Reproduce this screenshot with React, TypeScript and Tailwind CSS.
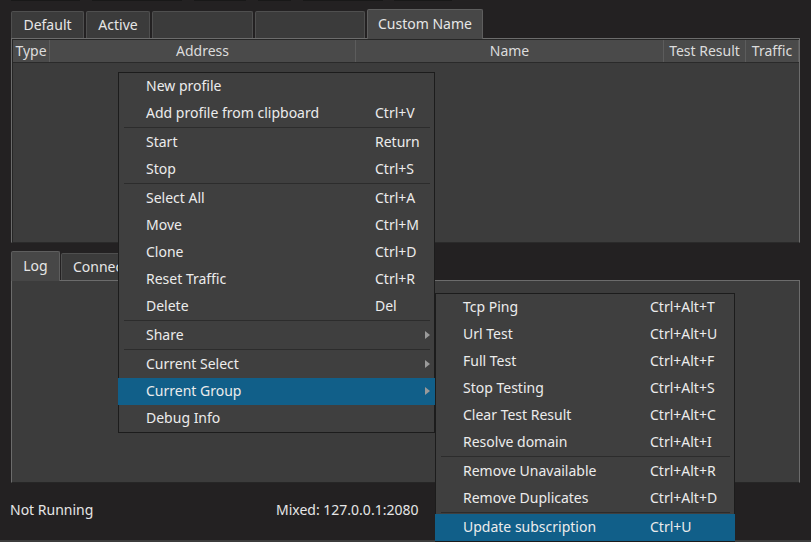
import React from "react";

type Item =
  | { sep: true }
  | { label: string; keys?: string; sub?: boolean; active?: boolean };

const mainMenu: Item[] = [
  { label: "New profile" },
  { label: "Add profile from clipboard", keys: "Ctrl+V" },
  { sep: true },
  { label: "Start", keys: "Return" },
  { label: "Stop", keys: "Ctrl+S" },
  { sep: true },
  { label: "Select All", keys: "Ctrl+A" },
  { label: "Move", keys: "Ctrl+M" },
  { label: "Clone", keys: "Ctrl+D" },
  { label: "Reset Traffic", keys: "Ctrl+R" },
  { label: "Delete", keys: "Del" },
  { sep: true },
  { label: "Share", sub: true },
  { sep: true },
  { label: "Current Select", sub: true },
  { label: "Current Group", sub: true, active: true },
  { label: "Debug Info" },
];

const groupMenu: Item[] = [
  { label: "Tcp Ping", keys: "Ctrl+Alt+T" },
  { label: "Url Test", keys: "Ctrl+Alt+U" },
  { label: "Full Test", keys: "Ctrl+Alt+F" },
  { label: "Stop Testing", keys: "Ctrl+Alt+S" },
  { label: "Clear Test Result", keys: "Ctrl+Alt+C" },
  { label: "Resolve domain", keys: "Ctrl+Alt+I" },
  { sep: true },
  { label: "Remove Unavailable", keys: "Ctrl+Alt+R" },
  { label: "Remove Duplicates", keys: "Ctrl+Alt+D" },
  { sep: true },
  { label: "Update subscription", keys: "Ctrl+U", active: true },
];

const columns = [
  { name: "Type", w: "w-[37px]" },
  { name: "Address", w: "w-[306px]" },
  { name: "Name", w: "w-[308px]" },
  { name: "Test Result", w: "w-[82px]" },
  { name: "Traffic", w: "flex-1" },
];

function Menu({ items, labelW }: { items: Item[]; labelW: string }) {
  return (
    <div className="flex flex-col">
      {items.map((it, i) =>
        "sep" in it ? (
          <div key={i} className="h-[2px] pl-[5px] pr-[4px]">
            <div className="h-px bg-[#2c2c2c]" />
          </div>
        ) : (
          <div
            key={i}
            className={`relative -mx-px flex h-[27px] items-center pb-[2px] pl-[28px] ${
              it.active ? "bg-[#115f89]" : ""
            }`}
          >
            <span className={`${labelW} shrink-0`}>{it.label}</span>
            {it.keys && <span>{it.keys}</span>}
            {it.sub && (
              <svg
                width="5"
                height="8"
                viewBox="0 0 5 8"
                className="absolute right-[5px] top-[9px]"
              >
                <path d="M0 0 L5 4 L0 8 Z" fill="#9a9a9a" />
              </svg>
            )}
          </div>
        )
      )}
    </div>
  );
}

function Tab({
  label,
  w,
  selected,
}: {
  label?: string;
  w: string;
  selected?: boolean;
}) {
  return (
    <div
      className={`${w} flex items-center justify-center rounded-t-[2px] border border-b-0 ${
        selected
          ? "relative z-10 -mb-px h-[30px] border-[#5e5e5e] bg-[#474747] pb-[3px]"
          : "h-[27px] border-[#4f4f4f] bg-[#3b3b3b] pb-[2px]"
      }`}
    >
      {label}
    </div>
  );
}

export default function App() {
  return (
    <div
      className="relative flex h-[542px] w-[811px] flex-col overflow-hidden bg-[#232122] text-[14px] text-[#e6e6e6]"
      style={{ fontFamily: '"Noto Sans", "Open Sans", sans-serif' }}
    >
      {/* toolbar remnants */}
      <div className="flex h-px">
        <span className="ml-[11px] w-[69px] bg-[#181818]" />
        <span className="ml-[12px] w-[90px] bg-[#181818]" />
        <span className="ml-[12px] w-[52px] bg-[#181818]" />
        <span className="ml-[12px] w-[33px] bg-[#181818]" />
        <span className="ml-[12px] w-[80px] bg-[#181818]" />
        <span className="ml-[11px] w-[58px] bg-[#181818]" />
      </div>

      {/* profile groups */}
      <div className="mt-[8px] flex h-[29px] items-end gap-[2px] pl-[11px]">
        <Tab label="Default" w="w-[73px]" />
        <Tab label="Active" w="w-[64px]" />
        <Tab w="w-[101px]" />
        <Tab w="w-[110px]" />
        <Tab label="Custom Name" w="w-[116px]" selected />
      </div>

      <div className="mx-[11px] h-[205px] border border-[#6c6c6c] border-b-[#2a2a2a] bg-[#3c3c3c]">
        <div className="h-full border border-[#262626] border-r-0 border-b-0">
          <div className="flex h-[23px] border-b border-[#2a2a2a] bg-[#4a4a4a] text-[#dcdcdc]">
            {columns.map((c) => (
              <div
                key={c.name}
                className={`${c.w} flex items-center justify-center whitespace-nowrap border-r border-[#5c5c5c] pb-px leading-none`}
              >
                {c.name}
              </div>
            ))}
          </div>
        </div>
      </div>

      {/* log area */}
      <div className="mt-[8px] flex h-[29px] items-end gap-[1px] pl-[11px]">
        <Tab label="Log" w="w-[49px]" selected />
        <div className="flex h-[27px] w-[104px] items-center rounded-t-[2px] border border-b-0 border-[#4f4f4f] bg-[#3b3b3b] pb-[2px] pl-[11px]">
          Connections
        </div>
      </div>
      <div className="mx-[11px] h-[203px] border border-[#6c6c6c] border-b-[#262626] bg-[#3c3c3c]" />

      {/* status */}
      <div className="flex flex-1 items-center pb-[4px] pl-[10px]">
        <span className="w-[266px]">Not Running</span>
        <span>Mixed: 127.0.0.1:2080</span>
      </div>
      <div className="h-[2px] bg-[#3c3c3c]" />

      {/* context menu */}
      <div className="absolute left-[118px] top-[72px] w-[317px] border border-[#1c1c1c] bg-[#3f3f3f] text-[#ececec]">
        <Menu items={mainMenu} labelW="w-[229px]" />
      </div>
      <div className="absolute left-[435px] top-[293px] w-[300px] border border-[#1c1c1c] bg-[#3f3f3f] text-[#ececec]">
        <Menu items={groupMenu} labelW="w-[187px]" />
      </div>
    </div>
  );
}
